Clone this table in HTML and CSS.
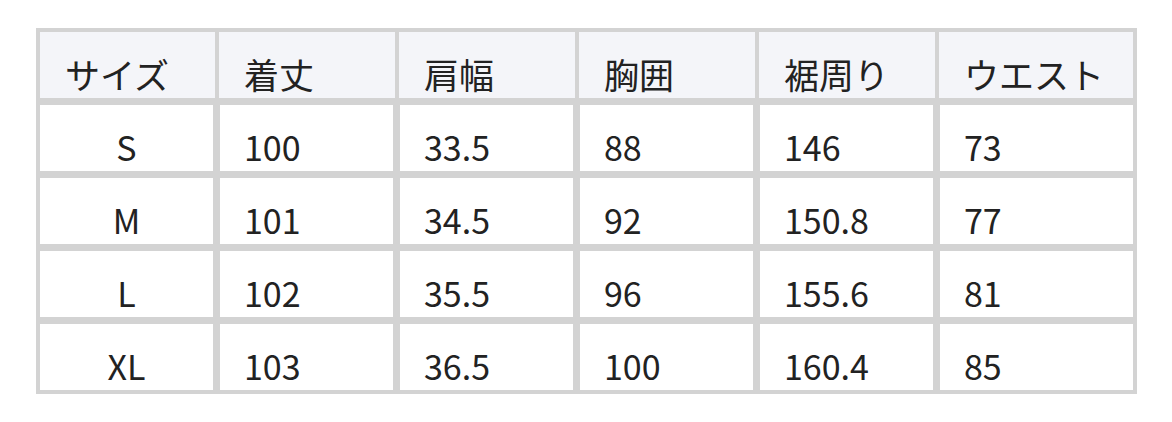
FILE: index.html
```html
<!DOCTYPE html>
<html lang="ja">
<head>
<meta charset="utf-8">
<title>サイズ表</title>
<link rel="stylesheet" href="styles.css">
</head>
<body>
<table class="size-table">
  <thead>
    <tr>
      <th class="c1">サイズ</th>
      <th class="c">着丈</th>
      <th class="c">肩幅</th>
      <th class="c">胸囲</th>
      <th class="c">裾周り</th>
      <th class="c6">ウエスト</th>
    </tr>
  </thead>
  <tbody>
    <tr><td class="size">S</td><td>100</td><td>33.5</td><td>88</td><td>146</td><td>73</td></tr>
    <tr><td class="size">M</td><td>101</td><td>34.5</td><td>92</td><td>150.8</td><td>77</td></tr>
    <tr><td class="size">L</td><td>102</td><td>35.5</td><td>96</td><td>155.6</td><td>81</td></tr>
    <tr><td class="size">XL</td><td>103</td><td>36.5</td><td>100</td><td>160.4</td><td>85</td></tr>
  </tbody>
</table>
</body>
</html>
```
FILE: styles.css
```css
html, body {
  margin: 0;
  padding: 0;
  background: #ffffff;
}

body {
  font-family: "Noto Sans CJK JP", "Noto Sans", sans-serif;
  color: #222222;
}

.size-table {
  margin: 28px 0 0 36px;
  width: 1101px;
  border: 4px solid #d3d3d3;
  border-collapse: separate;
  border-spacing: 0;
  table-layout: fixed;
  box-sizing: border-box;
}

.size-table th,
.size-table td {
  box-sizing: border-box;
  font-weight: 400;
  line-height: 48px;
  padding: 18px 0 0 25px;
  text-align: left;
  vertical-align: top;
  white-space: nowrap;
}

.size-table th {
  height: 66px;
  font-size: 35px;
  background: #f4f5f9;
  border-left: 2px solid #d3d3d3;
  border-right: 2px solid #d3d3d3;
}

.size-table th:first-child { border-left: 0; }
.size-table th:last-child { border-right: 0; }

.size-table th.c1 { width: 177px; }
.size-table th.c { width: 180px; }
.size-table th.c6 { width: 196px; }

.size-table td {
  height: 73px;
  font-size: 34px;
  background: #ffffff;
  border-top: 7px solid #d3d3d3;
  border-left: 3px solid #d3d3d3;
  border-right: 4px solid #d3d3d3;
  padding-left: 24px;
}

.size-table td:first-child { border-left: 0; }
.size-table td:last-child { border-right: 0; }

.size-table td.size {
  text-align: center;
  padding-left: 0;
}
```
